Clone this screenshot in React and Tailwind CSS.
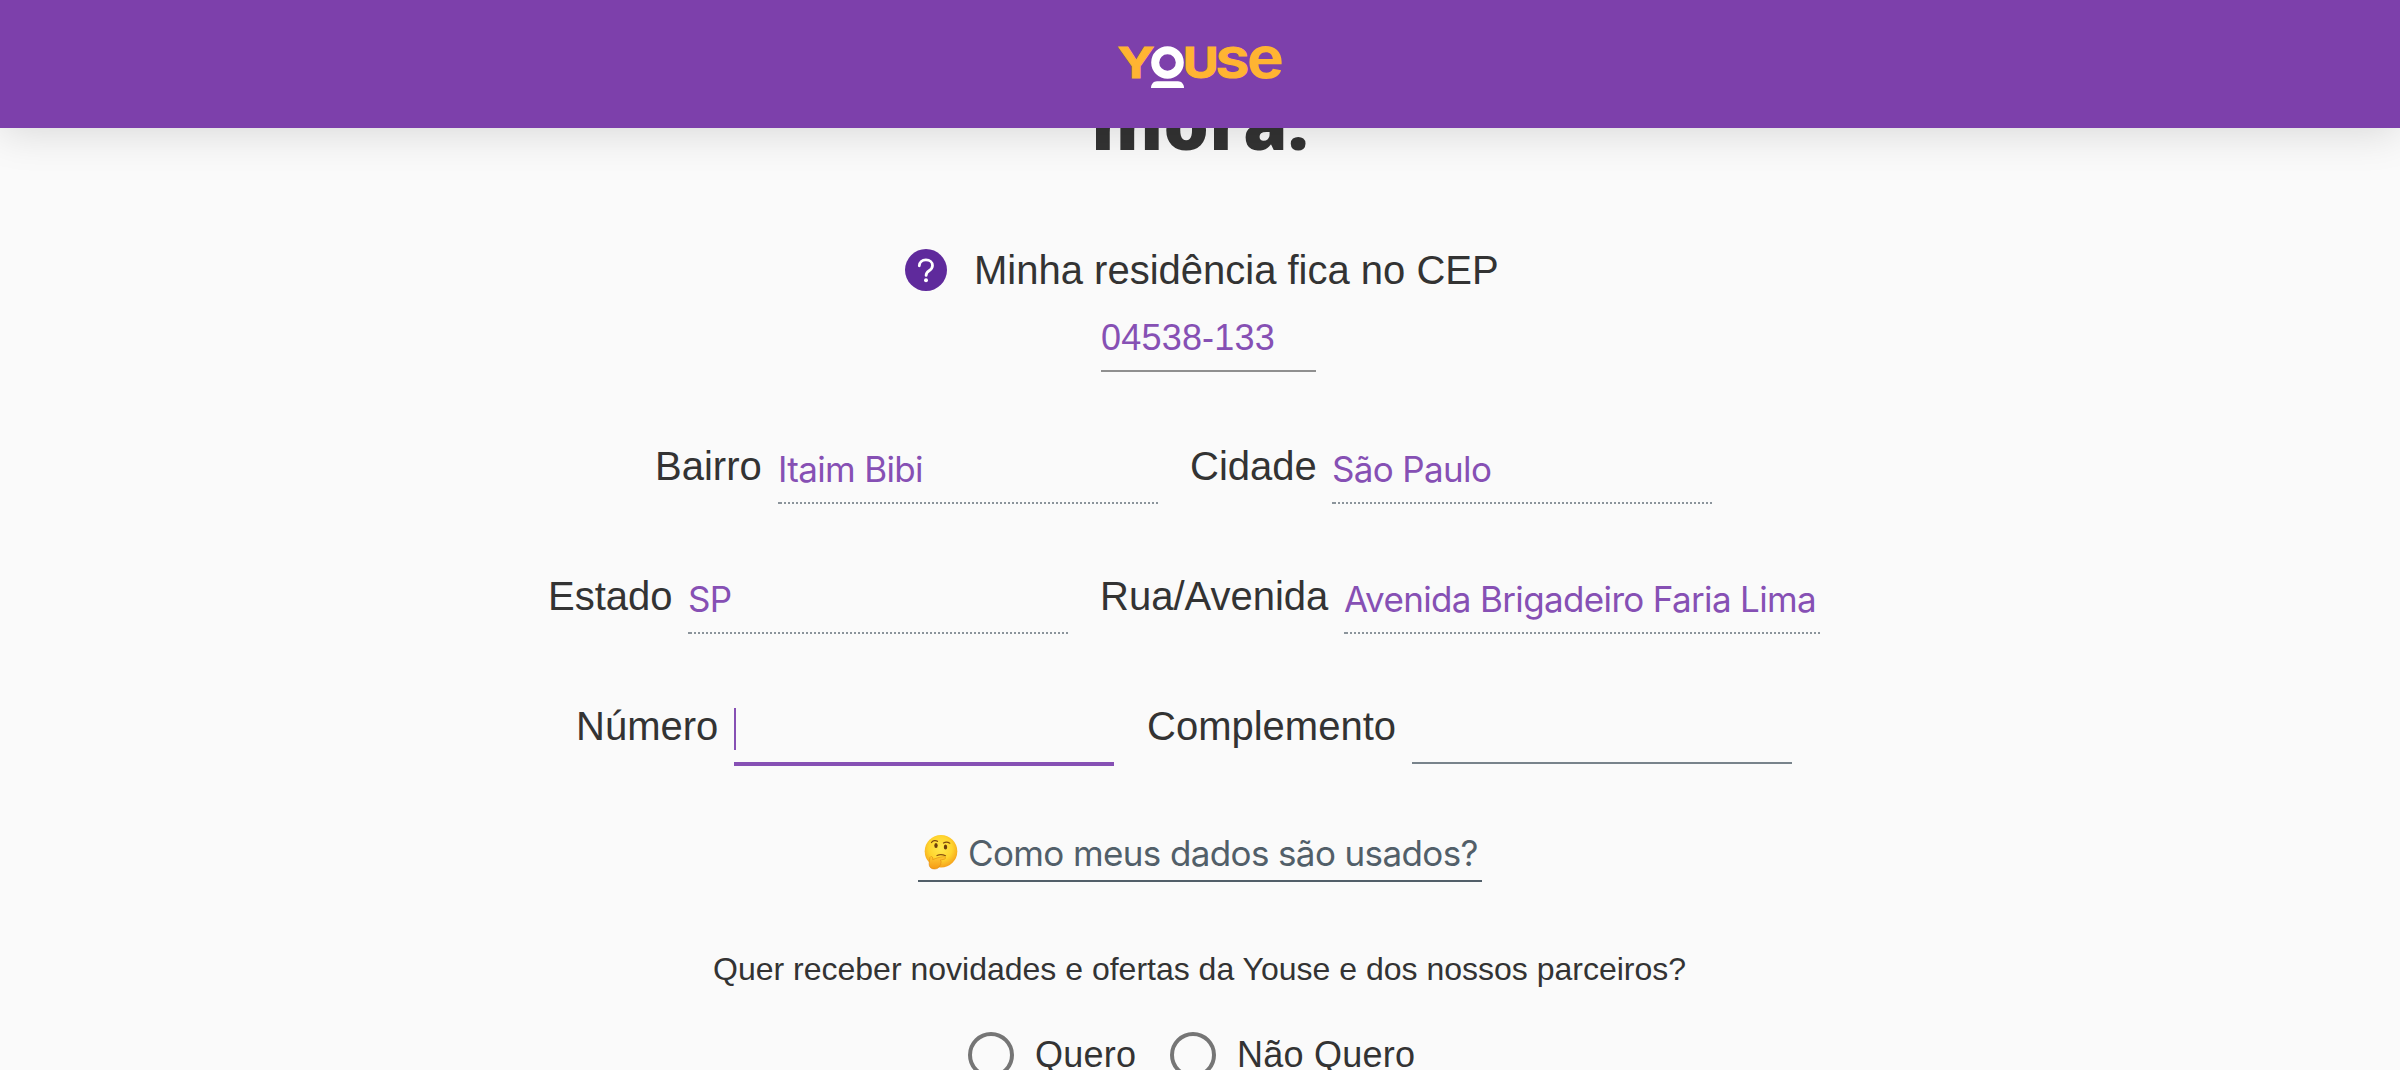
const DOTS =
  "h-0.5 border-l-2 border-[#8b949b] bg-[repeating-linear-gradient(90deg,#8b949b_0_2px,transparent_2px_4px)]";

function Logo() {
  return (
    <svg
      className="block h-[48px] w-[172px]"
      viewBox="1114 42 172 48"
      fontFamily="Inter, sans-serif"
      aria-label="Youse"
    >
      <g fill="#ffb432" fontWeight="700">
        <text x="1117.5" y="78.3" fontSize="43" textLength="37" lengthAdjust="spacingAndGlyphs" stroke="#ffb432" strokeWidth="1">Y</text>
        <text x="1183" y="78" fontSize="43" textLength="35.5" lengthAdjust="spacingAndGlyphs" stroke="#ffb432" strokeWidth="1.2">U</text>
        <text x="1216" y="78" fontSize="42.5" textLength="33" lengthAdjust="spacingAndGlyphs" stroke="#ffb432" strokeWidth="1">S</text>
        <text x="1247" y="78" fontSize="57" textLength="37" lengthAdjust="spacingAndGlyphs">e</text>
      </g>
      <circle cx="1167.5" cy="62.5" r="12.3" fill="none" stroke="#fff" strokeWidth="8" />
      <path d="M1151 88c0-4 2.500-6.800 6-6.800h21c3.500 0 6 2.800 6 6.800z" fill="#fff" />
    </svg>
  );
}

function HelpIcon() {
  return (
    <svg className="block size-[42px]" viewBox="0 0 42 42" fill="none" aria-label="Ajuda">
      <circle cx="21" cy="21" r="21" fill="#5f2a9c" />
      <path d="M14.300 16.800c.1-3.600 2.800-5.900 6.600-5.900 3.900 0 6.600 2.300 6.600 5.600 0 2.500-1.300 3.900-3.400 5.200-2.200 1.400-3 2.300-3 4.700" stroke="#fff" strokeWidth="2.800" strokeLinecap="round" />
      <circle cx="21" cy="31.300" r="2" fill="#fff" />
    </svg>
  );
}

function ThinkingFace() {
  return (
    <svg className="block h-[36px] w-[34px]" viewBox="0 0 34 36" fill="none" aria-hidden="true">
      <defs>
        <radialGradient id="face" cx="0.48" cy="0.4" r="0.6">
          <stop offset="0" stopColor="#ffe94e" />
          <stop offset="0.6" stopColor="#ffd52e" />
          <stop offset="1" stopColor="#f5a11c" />
        </radialGradient>
        <linearGradient id="hand" x1="0" y1="0" x2="0" y2="1">
          <stop offset="0" stopColor="#ffc933" />
          <stop offset="1" stopColor="#f59a14" />
        </linearGradient>
      </defs>
      <circle cx="17" cy="17.300" r="16.300" fill="url(#face)" />
      <ellipse cx="12" cy="11.500" rx="1.700" ry="2.600" fill="#6b3d0c" />
      <ellipse cx="21.500" cy="13" rx="1.700" ry="2.600" fill="#6b3d0c" />
      <path d="M7.500 8.500c1.200-2 4-2.600 6-1.200M19.500 9c2-1.200 4.600-.9 6.300.2" stroke="#7d4a10" strokeWidth="1.200" strokeLinecap="round" />
      <path d="M13 21.500c2.500-1.300 6-1 8.500.2" stroke="#8a5210" strokeWidth="1.200" strokeLinecap="round" />
      <path d="M6 23.500c.8-1.600 2.700-1 2.700.6v1.500c3-1.200 7.200-2.800 11-2.900 2.300 0 2.400 2.100.5 2.500l-4.200 1.100c1.300.6 1.500 2 .6 2.900.6 1 .1 2.200-1 2.600-.6 2.300-2.800 3.200-5.200 3.200-3.300 0-5.300-2-5.300-5.100 0-2.200.5-4.200.9-6.400z" fill="url(#hand)" stroke="#e08a10" strokeWidth=".6" />
    </svg>
  );
}

function Label({ width, children }) {
  return (
    <span className={`${width} block h-[64px] shrink-0 text-[40px] leading-[64px] whitespace-nowrap text-[#333333]`}>
      {children}
    </span>
  );
}

function LockedField({ width, children }) {
  return (
    <div className={`${width} h-[70px] shrink-0`}>
      <div className="h-[68px] font-['Inter',sans-serif] text-[35px] leading-[70px] tracking-[-0.65px] whitespace-nowrap text-[#8650b4]">
        {children}
      </div>
      <div className={DOTS} />
    </div>
  );
}

function Radio({ children }) {
  return (
    <label className="flex h-[46px] items-center">
      <span className="block size-[46px] rounded-full border-4 border-[#757575]" />
      <span className="ml-[21px] block text-[36px] leading-[48px] tracking-[0.25px] whitespace-nowrap">
        {children}
      </span>
    </label>
  );
}

export default function App() {
  return (
    <div className="h-[1070px] w-[2400px] overflow-hidden bg-[#fafafa] font-['Liberation_Sans',Arial,sans-serif] text-[#333333]">
      <header className="relative z-10 flex h-[128px] justify-center bg-[#7d40ab] pt-[42px] shadow-[0_4px_40px_rgba(0,0,0,0.14)]">
        <Logo />
      </header>

      <main className="flex flex-col">
        <h1 className="-mt-[62px] h-[102px] text-center font-['Open_Sans',sans-serif] text-[72px] leading-[112px] font-extrabold">
          mora.
        </h1>

        <div className="mt-[81px] flex h-[42px] items-center pl-[905px]">
          <HelpIcon />
          <span className="ml-[27px] text-[40px] leading-[42px] whitespace-nowrap">
            Minha residência fica no CEP
          </span>
        </div>

        <div className="mt-[21px] ml-[1101px] h-[60px] w-[215px] border-b-2 border-[#8f8f8f] text-[36px] leading-[52px] tracking-[0.2px] text-[#8650b4]">
          04538-133
        </div>

        <div className="mt-[62px] flex h-[130px] pl-[655px]">
          <Label width="w-[123px]">Bairro</Label>
          <LockedField width="w-[380px]">Itaim Bibi</LockedField>
          <span className="w-[32px]" />
          <Label width="w-[142px]">Cidade</Label>
          <LockedField width="w-[380px]">São Paulo</LockedField>
        </div>

        <div className="flex h-[130px] pl-[548px]">
          <Label width="w-[140px]">Estado</Label>
          <LockedField width="w-[380px]">SP</LockedField>
          <span className="w-[32px]" />
          <Label width="w-[244px]">Rua/Avenida</Label>
          <LockedField width="w-[476px]">Avenida Brigadeiro Faria Lima</LockedField>
        </div>

        <div className="flex h-[130px] pl-[576px]">
          <Label width="w-[158px]">Número</Label>
          <div className="h-[72px] w-[380px] border-b-4 border-[#8650b4] pt-[14px]">
            <div className="h-[42px] w-0.5 bg-[#8650b4]" />
          </div>
          <span className="w-[33px]" />
          <Label width="w-[265px]">Complemento</Label>
          <div className="h-[70px] w-[380px] border-b-2 border-[#78838b]" />
        </div>

        <a className="ml-[918px] flex h-[58px] w-[564px] border-b-2 border-[#525f69] pt-[10px] text-[#525f69]">
          <span className="ml-[6px] w-[44px]">
            <ThinkingFace />
          </span>
          <span className="font-['Inter',sans-serif] text-[35px] leading-[38px] tracking-[-0.62px] whitespace-nowrap">
            Como meus dados são usados?
          </span>
        </a>

        <p className="mt-[68px] ml-[713px] h-[38px] text-[32px] leading-[38px] whitespace-nowrap">
          Quer receber novidades e ofertas da Youse e dos nossos parceiros?
        </p>

        <div className="mt-[44px] flex pl-[968px]">
          <div className="w-[202px]">
            <Radio>Quero</Radio>
          </div>
          <Radio>Não Quero</Radio>
        </div>
      </main>
    </div>
  );
}
